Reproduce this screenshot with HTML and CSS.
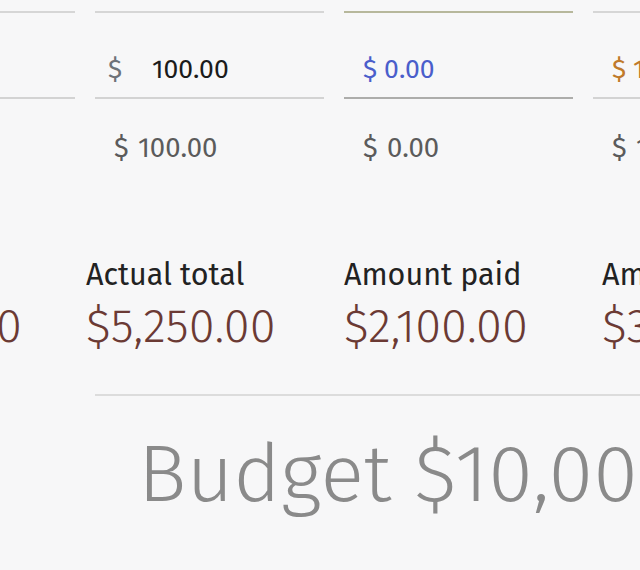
FILE: index.html
```html
<!DOCTYPE html>
<html lang="en">
<head>
<meta charset="utf-8">
<title>Budget</title>
<link rel="stylesheet" href="styles.css">
</head>
<body>
<div class="page">
  <div class="inputs">
    <div class="cell field"><span class="cur">$</span><span class="num">500.00</span></div>
    <div class="cell field"><span class="cur">$</span><span class="num">100.00</span></div>
    <div class="cell field paid"><span class="blue">$ 0.00</span></div>
    <div class="cell field"><span class="orange">$ 100.00</span></div>

    <div class="cell calc">$ 500.00</div>
    <div class="cell calc">$ 100.00</div>
    <div class="cell calc">$ 0.00</div>
    <div class="cell calc">$ 100.00</div>
  </div>

  <div class="summary">
    <div class="stat"><div class="label">Estimate</div><div class="value">$4,850.00</div></div>
    <div class="stat"><div class="label">Actual total</div><div class="value">$5,250.00</div></div>
    <div class="stat"><div class="label">Amount paid</div><div class="value">$2,100.00</div></div>
    <div class="stat"><div class="label">Amount due</div><div class="value">$3,150.00</div></div>
  </div>

  <div class="budget">
    <div class="budget-text">Budget $10,000.00</div>
  </div>
</div>
</body>
</html>
```

FILE: styles.css
```css
html, body {
  margin: 0;
  padding: 0;
  background: #f7f7f8;
}
body {
  font-family: "Fira Sans", "Open Sans", "Noto Sans", sans-serif;
  color: #222;
}
.page {
  width: 640px;
  height: 570px;
  overflow: hidden;
}
.inputs {
  display: grid;
  grid-template-columns: 229px 229px 229px 229px;
  column-gap: 20px;
  margin-left: -154px;
  padding-top: 11px;
  font-size: 26.5px;
  line-height: 30px;
  white-space: nowrap;
}
.field {
  border-top: 2px solid #d6d6d6;
  border-bottom: 2px solid #d3d3d3;
  padding: 41px 0 13px 13px;
  display: flex;
}
.field.paid {
  border-top-color: #b7b89c;
  border-bottom-color: #adadab;
  padding-left: 19px;
}
.cur {
  color: #6e7278;
  width: 44px;
}
.num {
  color: #1b1b1b;
}
.blue { color: #4a5ecb; }
.orange { color: #c07a2a; padding-left: 6px; }
.calc {
  padding: 34px 0 0 19px;
  color: #5b5b5b;
  font-size: 27.5px;
  word-spacing: 2px;
}
.summary {
  display: grid;
  grid-template-columns: 258px 258px 258px 258px;
  margin-left: -172px;
  margin-top: 95px;
  white-space: nowrap;
}
.label {
  font-size: 30.5px;
  line-height: 34px;
  color: #222;
}
.value {
  margin-top: 4px;
  font-size: 47px;
  line-height: 60px;
  font-weight: 300;
  color: #6b3a34;
}
.budget {
  margin-left: 95px;
  margin-top: 38px;
  border-top: 2px solid #dcdcdc;
}
.budget-text {
  padding-left: 43px;
  padding-top: 28px;
  font-size: 81px;
  line-height: 100px;
  font-weight: 300;
  color: #8a8a8a;
  white-space: nowrap;
}
```
